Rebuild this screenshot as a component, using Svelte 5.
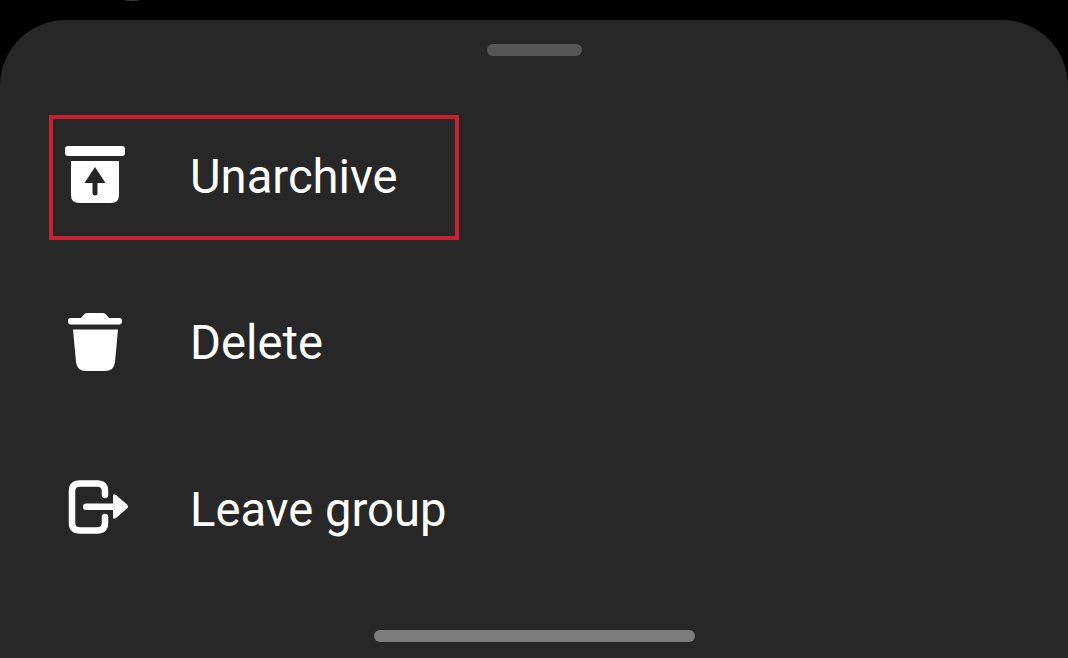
<script>
  const rows = [
    { label: 'Unarchive', view: '60 142 70 70', icon: 'archive', highlighted: true },
    { label: 'Delete', view: '60 308 70 70', icon: 'trash', highlighted: false },
    { label: 'Leave group', view: '60 475 70 70', icon: 'leave', highlighted: false }
  ];
</script>

<main class="screen">
  <span class="peek"></span>
  <section class="sheet">
    <div class="grabber"></div>
    <ul class="menu">
      {#each rows as row}
        <li class="row">
          {#if row.highlighted}<span class="callout"></span>{/if}
          <svg class="icon" viewBox={row.view} aria-hidden="true">
            {#if row.icon === 'archive'}
              <rect x="65" y="146" width="60" height="10" rx="3" fill="#fff" />
              <path d="M71 161H119V195Q119 203 111 203H79Q71 203 71 195Z" fill="#fff" />
              <path d="M95 167L105.5 183H97.5V193.5Q97.5 195.500 95 195.500Q92.500 195.500 92.500 193.500V183H84.500Z" fill="#262626" />
            {:else if row.icon === 'trash'}
              <path d="M70.500 317H81L84 313.500Q85 312 87 312H103Q105 312 106 313.500L109 317H119.500Q122 317 122 320Q122 323.500 119.500 323.500H70.500Q68 323.500 68 320Q68 317 70.500 317Z" fill="#fff" />
              <path d="M73 328.500H118L115 361Q114 370 105 370H86Q77 370 76 361Z" fill="#fff" />
            {:else}
              <path d="M105 495V491Q105 483.500 97 483.500H80Q72 483.500 72 491V523Q72 530.500 80 530.500H97Q105 530.500 105 523V517" fill="none" stroke="#fff" stroke-width="6.500" stroke-linecap="round" />
              <path d="M86 503.500H113V496Q113 493 116 495L127 504.500Q129 506.500 127 508.500L116 518Q113 520 113 517V510H86Q83 510 83 506.800Q83 503.500 86 503.500Z" fill="#fff" />
            {/if}
          </svg>
          <span class="label">{row.label}</span>
        </li>
      {/each}
    </ul>
    <div class="home-bar"></div>
  </section>
</main>

<style>
  :global(body) {
    margin: 0;
    background: #000;
  }
  .screen {
    position: relative;
    width: 1068px;
    height: 658px;
    padding-top: 20px;
    box-sizing: border-box;
    overflow: hidden;
    background: #000;
    font-family: Roboto, "Liberation Sans", sans-serif;
  }
  .peek {
    position: absolute;
    left: 120px;
    top: -5px;
    width: 24px;
    height: 6px;
    border-radius: 50%;
    background: #3a3a3a;
  }
  .sheet {
    display: flex;
    flex-direction: column;
    height: 638px;
    border-radius: 66px 66px 0 0;
    background: #272727;
  }
  .grabber {
    align-self: center;
    flex: none;
    width: 95px;
    height: 12px;
    margin-top: 24px;
    border-radius: 6px;
    background: #565656;
  }
  .menu {
    flex: 1;
    margin: 38px 0 0;
    padding: 0;
    list-style: none;
  }
  .row {
    position: relative;
    display: flex;
    align-items: center;
    gap: 60px;
    height: 166.500px;
    padding-left: 60px;
    color: #fff;
  }
  .icon {
    flex: none;
    width: 70px;
    height: 70px;
  }
  .label {
    font-size: 47.200px;
    line-height: 1;
  }
  .callout {
    position: absolute;
    left: 49px;
    top: 21px;
    width: 410px;
    height: 125px;
    box-sizing: border-box;
    border: 4.500px solid #c9212d;
  }
  .home-bar {
    align-self: center;
    flex: none;
    width: 321px;
    height: 12px;
    margin-bottom: 16px;
    border-radius: 6px;
    background: #7c7c7c;
  }
</style>
